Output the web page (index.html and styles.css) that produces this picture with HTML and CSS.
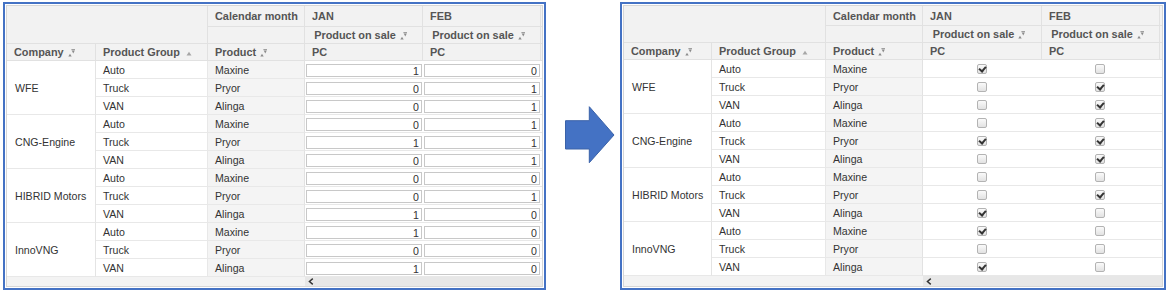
FILE: index.html
```html
<!DOCTYPE html>
<html>
<head>
<meta charset="utf-8">
<link rel="stylesheet" href="styles.css">
</head>
<body>
<div class="stage">
  <section class="panel panel-left">
    <div class="view">
      <table class="grid">
        <colgroup><col class="c1"><col class="c2"><col class="c3"><col class="c4"><col class="c5"><col class="c6"></colgroup>
        <thead>
          <tr class="h1"><th class="corner" colspan="2" rowspan="2"></th><th>Calendar month</th><th>JAN</th><th>FEB</th><th></th></tr>
          <tr class="h2"><th></th><th class="ctr">Product on sale <svg class="sort" width="7" height="8" viewBox="0 0 7 8"><polygon points="0.3,7.6 2,4.8 3.7,7.6"/><rect x="3.4" y="0.2" width="3.6" height="0.9"/><polygon points="3.7,1.6 6.8,1.6 5.25,4.4"/></svg></th><th class="ctr">Product on sale <svg class="sort" width="7" height="8" viewBox="0 0 7 8"><polygon points="0.3,7.6 2,4.8 3.7,7.6"/><rect x="3.4" y="0.2" width="3.6" height="0.9"/><polygon points="3.7,1.6 6.8,1.6 5.25,4.4"/></svg></th><th></th></tr>
          <tr class="h3"><th>Company <svg class="sort" width="7" height="8" viewBox="0 0 7 8"><polygon points="0.3,7.6 2,4.8 3.7,7.6"/><rect x="3.4" y="0.2" width="3.6" height="0.9"/><polygon points="3.7,1.6 6.8,1.6 5.25,4.4"/></svg></th><th>Product Group <svg class="asc" width="6" height="5" viewBox="0 0 6 5"><polygon points="0.5,4.5 3,0.8 5.5,4.5"/></svg></th><th>Product <svg class="sort" width="7" height="8" viewBox="0 0 7 8"><polygon points="0.3,7.6 2,4.8 3.7,7.6"/><rect x="3.4" y="0.2" width="3.6" height="0.9"/><polygon points="3.7,1.6 6.8,1.6 5.25,4.4"/></svg></th><th>PC</th><th>PC</th><th></th></tr>
        </thead>
        <tbody>
          <tr><td class="co" rowspan="3">WFE</td><td class="pg">Auto</td><td class="pr">Maxine</td><td class="v"><input class="num" value="1" readonly></td><td class="v"><input class="num" value="0" readonly></td><td class="v"><input class="num" value="" readonly></td></tr>
          <tr><td class="pg">Truck</td><td class="pr">Pryor</td><td class="v"><input class="num" value="0" readonly></td><td class="v"><input class="num" value="1" readonly></td><td class="v"><input class="num" value="" readonly></td></tr>
          <tr><td class="pg">VAN</td><td class="pr">Alinga</td><td class="v"><input class="num" value="0" readonly></td><td class="v"><input class="num" value="1" readonly></td><td class="v"><input class="num" value="" readonly></td></tr>
          <tr><td class="co" rowspan="3">CNG-Engine</td><td class="pg">Auto</td><td class="pr">Maxine</td><td class="v"><input class="num" value="0" readonly></td><td class="v"><input class="num" value="1" readonly></td><td class="v"><input class="num" value="" readonly></td></tr>
          <tr><td class="pg">Truck</td><td class="pr">Pryor</td><td class="v"><input class="num" value="1" readonly></td><td class="v"><input class="num" value="1" readonly></td><td class="v"><input class="num" value="" readonly></td></tr>
          <tr><td class="pg">VAN</td><td class="pr">Alinga</td><td class="v"><input class="num" value="0" readonly></td><td class="v"><input class="num" value="1" readonly></td><td class="v"><input class="num" value="" readonly></td></tr>
          <tr><td class="co" rowspan="3">HIBRID Motors</td><td class="pg">Auto</td><td class="pr">Maxine</td><td class="v"><input class="num" value="0" readonly></td><td class="v"><input class="num" value="0" readonly></td><td class="v"><input class="num" value="" readonly></td></tr>
          <tr><td class="pg">Truck</td><td class="pr">Pryor</td><td class="v"><input class="num" value="0" readonly></td><td class="v"><input class="num" value="1" readonly></td><td class="v"><input class="num" value="" readonly></td></tr>
          <tr><td class="pg">VAN</td><td class="pr">Alinga</td><td class="v"><input class="num" value="1" readonly></td><td class="v"><input class="num" value="0" readonly></td><td class="v"><input class="num" value="" readonly></td></tr>
          <tr><td class="co" rowspan="3">InnoVNG</td><td class="pg">Auto</td><td class="pr">Maxine</td><td class="v"><input class="num" value="1" readonly></td><td class="v"><input class="num" value="0" readonly></td><td class="v"><input class="num" value="" readonly></td></tr>
          <tr><td class="pg">Truck</td><td class="pr">Pryor</td><td class="v"><input class="num" value="0" readonly></td><td class="v"><input class="num" value="0" readonly></td><td class="v"><input class="num" value="" readonly></td></tr>
          <tr><td class="pg">VAN</td><td class="pr">Alinga</td><td class="v"><input class="num" value="1" readonly></td><td class="v"><input class="num" value="0" readonly></td><td class="v"><input class="num" value="" readonly></td></tr>
        </tbody>
      </table>
      <div class="scroll">
        <div class="scroll-fixed"></div>
        <div class="scroll-track"><svg class="chev" width="6" height="7" viewBox="0 0 6 7"><polyline points="4.8,0.6 1.4,3.5 4.8,6.4"/></svg></div>
      </div>
    </div>
  </section>

  <div class="arrow-wrap">
    <svg class="arrow" width="50" height="58" viewBox="0 0 50 58"><polygon points="0.5,14.7 24.3,14.7 24.3,0.7 49,29 24.3,56.7 24.3,43 0.5,43"/></svg>
  </div>

  <section class="panel panel-right">
    <div class="view">
      <table class="grid">
        <colgroup><col class="c1"><col class="c2"><col class="c3"><col class="c4"><col class="c5"><col class="c6"></colgroup>
        <thead>
          <tr class="h1"><th class="corner" colspan="2" rowspan="2"></th><th>Calendar month</th><th>JAN</th><th>FEB</th><th></th></tr>
          <tr class="h2"><th></th><th class="ctr">Product on sale <svg class="sort" width="7" height="8" viewBox="0 0 7 8"><polygon points="0.3,7.6 2,4.8 3.7,7.6"/><rect x="3.4" y="0.2" width="3.6" height="0.9"/><polygon points="3.7,1.6 6.8,1.6 5.25,4.4"/></svg></th><th class="ctr">Product on sale <svg class="sort" width="7" height="8" viewBox="0 0 7 8"><polygon points="0.3,7.6 2,4.8 3.7,7.6"/><rect x="3.4" y="0.2" width="3.6" height="0.9"/><polygon points="3.7,1.6 6.8,1.6 5.25,4.4"/></svg></th><th></th></tr>
          <tr class="h3"><th>Company <svg class="sort" width="7" height="8" viewBox="0 0 7 8"><polygon points="0.3,7.6 2,4.8 3.7,7.6"/><rect x="3.4" y="0.2" width="3.6" height="0.9"/><polygon points="3.7,1.6 6.8,1.6 5.25,4.4"/></svg></th><th>Product Group <svg class="asc" width="6" height="5" viewBox="0 0 6 5"><polygon points="0.5,4.5 3,0.8 5.5,4.5"/></svg></th><th>Product <svg class="sort" width="7" height="8" viewBox="0 0 7 8"><polygon points="0.3,7.6 2,4.8 3.7,7.6"/><rect x="3.4" y="0.2" width="3.6" height="0.9"/><polygon points="3.7,1.6 6.8,1.6 5.25,4.4"/></svg></th><th>PC</th><th>PC</th><th></th></tr>
        </thead>
        <tbody>
          <tr><td class="co" rowspan="3">WFE</td><td class="pg">Auto</td><td class="pr">Maxine</td><td class="cb"><span class="box on"></span></td><td class="cb"><span class="box"></span></td><td class="cb"></td></tr>
          <tr><td class="pg">Truck</td><td class="pr">Pryor</td><td class="cb"><span class="box"></span></td><td class="cb"><span class="box on"></span></td><td class="cb"></td></tr>
          <tr><td class="pg">VAN</td><td class="pr">Alinga</td><td class="cb"><span class="box"></span></td><td class="cb"><span class="box on"></span></td><td class="cb"></td></tr>
          <tr><td class="co" rowspan="3">CNG-Engine</td><td class="pg">Auto</td><td class="pr">Maxine</td><td class="cb"><span class="box"></span></td><td class="cb"><span class="box on"></span></td><td class="cb"></td></tr>
          <tr><td class="pg">Truck</td><td class="pr">Pryor</td><td class="cb"><span class="box on"></span></td><td class="cb"><span class="box on"></span></td><td class="cb"></td></tr>
          <tr><td class="pg">VAN</td><td class="pr">Alinga</td><td class="cb"><span class="box"></span></td><td class="cb"><span class="box on"></span></td><td class="cb"></td></tr>
          <tr><td class="co" rowspan="3">HIBRID Motors</td><td class="pg">Auto</td><td class="pr">Maxine</td><td class="cb"><span class="box"></span></td><td class="cb"><span class="box"></span></td><td class="cb"></td></tr>
          <tr><td class="pg">Truck</td><td class="pr">Pryor</td><td class="cb"><span class="box"></span></td><td class="cb"><span class="box on"></span></td><td class="cb"></td></tr>
          <tr><td class="pg">VAN</td><td class="pr">Alinga</td><td class="cb"><span class="box on"></span></td><td class="cb"><span class="box"></span></td><td class="cb"></td></tr>
          <tr><td class="co" rowspan="3">InnoVNG</td><td class="pg">Auto</td><td class="pr">Maxine</td><td class="cb"><span class="box on"></span></td><td class="cb"><span class="box"></span></td><td class="cb"></td></tr>
          <tr><td class="pg">Truck</td><td class="pr">Pryor</td><td class="cb"><span class="box"></span></td><td class="cb"><span class="box"></span></td><td class="cb"></td></tr>
          <tr><td class="pg">VAN</td><td class="pr">Alinga</td><td class="cb"><span class="box on"></span></td><td class="cb"><span class="box"></span></td><td class="cb"></td></tr>
        </tbody>
      </table>
      <div class="scroll">
        <div class="scroll-fixed"></div>
        <div class="scroll-track"><svg class="chev" width="6" height="7" viewBox="0 0 6 7"><polyline points="4.8,0.6 1.4,3.5 4.8,6.4"/></svg></div>
      </div>
    </div>
  </section>
</div>
</body>
</html>
```

FILE: styles.css
```css
html, body {
  margin: 0;
  padding: 0;
  background: #ffffff;
}

body {
  font-family: "Liberation Sans", Arial, sans-serif;
  color: #333333;
}

.stage {
  display: flex;
  align-items: flex-start;
  width: 1170px;
  height: 298px;
}

.panel {
  margin-top: 2px;
  border: 2px solid #4472c4;
  padding: 1px;
  background: #ffffff;
  box-sizing: border-box;
}

.panel-left {
  margin-left: 3px;
  width: 543px;
}

.panel-right {
  width: 546px;
}

.view {
  border: 1px solid #d6d6d6;
  overflow: hidden;
}

.grid {
  border-collapse: separate;
  border-spacing: 0;
  table-layout: fixed;
}

.panel-left .grid { width: 634px; }
.panel-right .grid { width: 636px; }

.panel-left col.c1 { width: 89px; }
.panel-left col.c2 { width: 112px; }
.panel-left col.c3 { width: 97px; }
.panel-left col.c4 { width: 118px; }
.panel-left col.c5 { width: 118px; }
.panel-left col.c6 { width: 100px; }

.panel-right col.c1 { width: 88px; }
.panel-right col.c2 { width: 114px; }
.panel-right col.c3 { width: 97px; }
.panel-right col.c4 { width: 119px; }
.panel-right col.c5 { width: 118px; }
.panel-right col.c6 { width: 100px; }

th {
  background: #f2f2f2;
  color: #555555;
  font-size: 10.9px;
  font-weight: bold;
  text-align: left;
  padding: 0 0 0 7px;
  border-right: 1px solid #e1e1e1;
  border-bottom: 1px solid #e1e1e1;
  white-space: nowrap;
  overflow: hidden;
  vertical-align: middle;
}

th.ctr {
  text-align: center;
  padding: 0 6px 0 0;
}

.panel-left tr.h1 { height: 21px; }
.panel-right tr.h1 { height: 20px; }
tr.h2 { height: 17px; }
tr.h3 { height: 17px; }

tbody tr { height: 18px; }

td {
  font-size: 10.6px;
  color: #333333;
  padding: 0 0 0 7px;
  border-bottom: 1px solid #e8e8e8;
  white-space: nowrap;
  overflow: hidden;
  vertical-align: middle;
  background: #ffffff;
}

td.co {
  padding-left: 8px;
  border-right: 1px solid #e4e4e4;
}

td.pg {
  border-right: 1px solid #e8e8e8;
}

td.pr {
  background: #f4f4f4;
  border-right: 1px solid #e2e2e2;
}

td.v {
  padding: 3px 1px 0 1px;
  vertical-align: top;
}

.num {
  display: block;
  box-sizing: border-box;
  width: 100%;
  height: 13px;
  margin: 0;
  padding: 0 2px 0 0;
  border: 1px solid #c8c8c8;
  background: #ffffff;
  font-family: "Liberation Sans", Arial, sans-serif;
  font-size: 10.6px;
  line-height: 11px;
  color: #333333;
  text-align: right;
  outline: none;
}

td.cb {
  padding: 0;
  text-align: center;
  padding-right: 2px;
}

.box {
  display: inline-block;
  box-sizing: border-box;
  width: 10px;
  height: 10px;
  border: 1px solid #b3b3b3;
  border-radius: 2px;
  background: linear-gradient(#fafafa, #e2e2e2);
  vertical-align: middle;
  position: relative;
  top: -1px;
}

.box.on::after {
  content: "";
  position: absolute;
  left: 2px;
  top: 0px;
  width: 3px;
  height: 5px;
  border-right: 2px solid #333333;
  border-bottom: 2px solid #333333;
  transform: rotate(40deg);
}

.sort {
  fill: #8a8a8a;
  vertical-align: -1px;
  margin-left: 1px;
}

.asc {
  fill: #a6a6a6;
  vertical-align: 0;
  margin-left: 3px;
}

.scroll {
  display: flex;
  height: 9px;
}

.panel-right .scroll { height: 10px; }

.panel-left .scroll-fixed { width: 298px; }
.panel-right .scroll-fixed { width: 299px; }

.scroll-fixed {
  background: #f3f3f3;
}

.scroll-track {
  flex: 1;
  background: #e7e7e7;
  display: flex;
  align-items: center;
  padding-left: 3px;
}

.chev {
  fill: none;
  stroke: #333333;
  stroke-width: 1.4;
}

.arrow-wrap {
  width: 74px;
  display: flex;
  padding-top: 106px;
  padding-left: 19px;
  box-sizing: border-box;
}

.arrow {
  fill: #4472c4;
  stroke: #3a62a8;
  stroke-width: 1;
}
```
